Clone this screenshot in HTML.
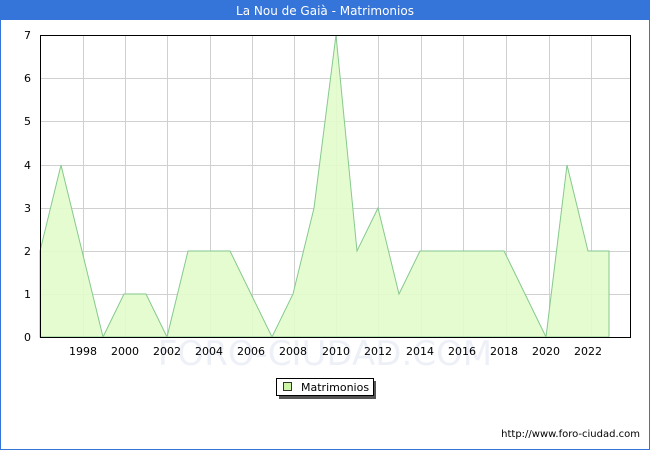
<!DOCTYPE html>
<html><head><meta charset="utf-8"><style>
body{margin:0;width:650px;height:450px;overflow:hidden;background:#fff;font-family:"DejaVu Sans","Liberation Sans",sans-serif;}
</style></head><body>
<svg width="650" height="450" xmlns="http://www.w3.org/2000/svg" font-family="DejaVu Sans, Liberation Sans, sans-serif">
<rect x="0.5" y="0.5" width="649" height="449" fill="#fff" stroke="#3574d8"/>
<rect x="0" y="0" width="650" height="20" fill="#3574d8"/>
<text x="325" y="15" fill="#fff" font-size="12" text-anchor="middle">La Nou de Gaià - Matrimonios</text>
<text x="325" y="365" fill="#eef0f8" font-size="34" text-anchor="middle">FORO-CIUDAD.COM</text>
<g stroke="#d0d0d0" stroke-width="1">
<line x1="40" y1="294.5" x2="631" y2="294.5"/><line x1="40" y1="251.5" x2="631" y2="251.5"/>
<line x1="40" y1="208.5" x2="631" y2="208.5"/><line x1="40" y1="165.5" x2="631" y2="165.5"/>
<line x1="40" y1="121.5" x2="631" y2="121.5"/><line x1="40" y1="78.5" x2="631" y2="78.5"/>
<line x1="83.5" y1="35" x2="83.5" y2="337"/><line x1="125.5" y1="35" x2="125.5" y2="337"/>
<line x1="167.5" y1="35" x2="167.5" y2="337"/><line x1="210.5" y1="35" x2="210.5" y2="337"/>
<line x1="252.5" y1="35" x2="252.5" y2="337"/><line x1="294.5" y1="35" x2="294.5" y2="337"/>
<line x1="336.5" y1="35" x2="336.5" y2="337"/><line x1="378.5" y1="35" x2="378.5" y2="337"/>
<line x1="421.5" y1="35" x2="421.5" y2="337"/><line x1="463.5" y1="35" x2="463.5" y2="337"/>
<line x1="506.5" y1="35" x2="506.5" y2="337"/><line x1="549.5" y1="35" x2="549.5" y2="337"/>
<line x1="591.5" y1="35" x2="591.5" y2="337"/>
</g>
<polygon fill="#e2fccc" fill-opacity="0.9" stroke="#86c98e" stroke-width="1" points="40,337 40,251 61,165 82,251 103,337 124,294 146,294 167,337 188,251 209,251 230,251 251,294 272,337 293,294 314,208 336,35 357,251 378,208 399,294 420,251 441,251 462,251 483,251 504,251 525,294 546,337 567,165 588,251 609,251 609,337"/>
<rect x="40.5" y="35.5" width="590" height="302" fill="none" stroke="#000"/>
<g font-size="11" fill="#000" text-anchor="end">
<text x="31" y="341">0</text><text x="31" y="298">1</text><text x="31" y="255">2</text><text x="31" y="212">3</text>
<text x="31" y="169">4</text><text x="31" y="125">5</text><text x="31" y="82">6</text><text x="31" y="39">7</text>
</g>
<g font-size="11" fill="#000" text-anchor="middle">
<text x="83" y="355">1998</text><text x="125" y="355">2000</text><text x="167" y="355">2002</text><text x="209" y="355">2004</text>
<text x="251" y="355">2006</text><text x="293" y="355">2008</text><text x="336" y="355">2010</text><text x="378" y="355">2012</text>
<text x="420" y="355">2014</text><text x="462" y="355">2016</text><text x="504" y="355">2018</text><text x="546" y="355">2020</text>
<text x="588" y="355">2022</text>
</g>
<rect x="279" y="381" width="97" height="18" fill="#555"/>
<rect x="276.5" y="378.5" width="97" height="17" fill="#fff" stroke="#000"/>
<rect x="283.5" y="382.5" width="8" height="8" fill="#ccf5a6" stroke="#333"/>
<text x="301" y="391" font-size="11" fill="#000">Matrimonios</text>
<text x="640" y="437" font-size="10" fill="#000" text-anchor="end">http://www.foro-ciudad.com</text>
</svg>
</body></html>
